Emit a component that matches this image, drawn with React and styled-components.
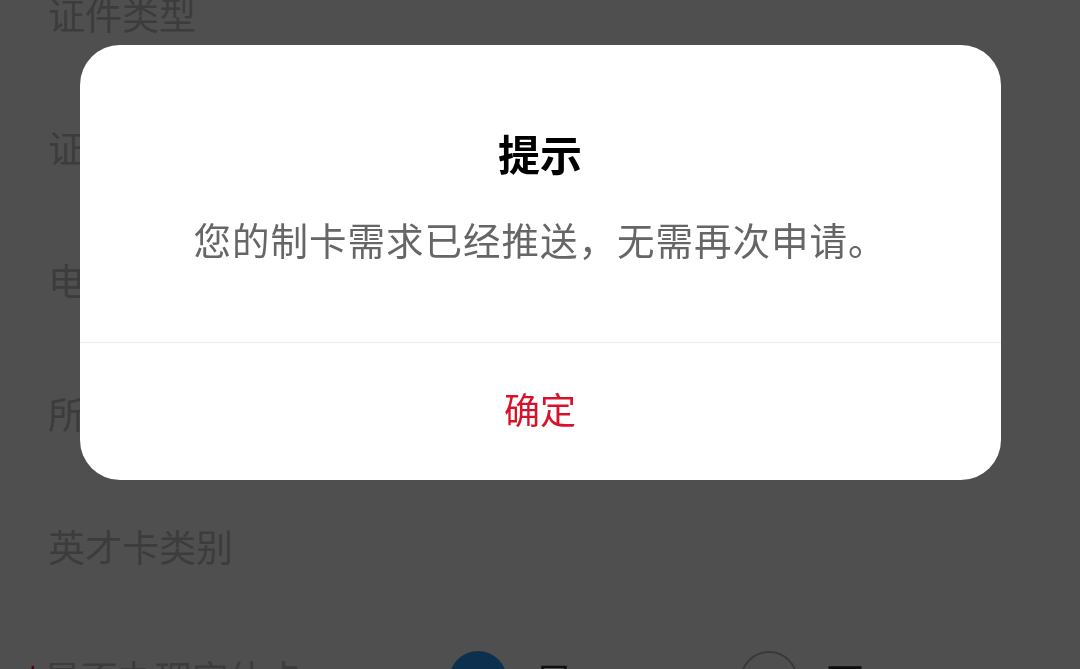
import React from 'react';
import styled, { createGlobalStyle } from 'styled-components';

const GlobalStyle = createGlobalStyle`
  html, body {
    margin: 0;
    padding: 0;
    background: #ffffff;
    overflow: hidden;
  }

  body {
    font-family: "Noto Sans CJK SC", "Noto Sans", sans-serif;
  }
`;

const Page = styled.div`
  width: 1080px;
  height: 669px;
  overflow: hidden;
  background: #ffffff;
`;

// the form is scrolled a little: first row is half out of view
const Form = styled.div`
  margin-top: -52px;
  display: flex;
  flex-direction: column;
`;

const Row = styled.div`
  height: 133px;
  display: flex;
  align-items: center;
  padding-left: ${(p) => (p.required ? '24px' : '48px')};
`;

const Label = styled.div`
  width: ${(p) => (p.required ? '425px' : 'auto')};
  font-size: 37px;
  line-height: 1;
  color: #c3c3c3;
  white-space: nowrap;
  display: flex;
  align-items: flex-start;
`;

const Star = styled.span`
  color: #f0102a;
  font-size: 38px;
  margin-right: 2px;
  line-height: 1.1;
`;

const RadioGroup = styled.div`
  display: flex;
  align-items: center;
  gap: 167px;
`;

const Option = styled.div`
  display: flex;
  align-items: center;
  gap: 28px;
  font-size: 38px;
  color: #333333;
`;

const Circle = styled.span`
  width: 58px;
  height: 58px;
  border-radius: 50%;
  box-sizing: border-box;
  display: flex;
  align-items: center;
  justify-content: center;
  background: ${(p) => (p.checked ? '#2a9cff' : '#ffffff')};
  border: ${(p) => (p.checked ? 'none' : '2px solid #b8b8b8')};
`;

const Overlay = styled.div`
  position: fixed;
  inset: 0;
  background: rgba(0, 0, 0, 0.69);
  display: flex;
  justify-content: center;
  align-items: flex-start;
  padding-top: 45px;
`;

const Dialog = styled.div`
  width: 921px;
  background: #ffffff;
  border-radius: 40px;
  overflow: hidden;
  display: flex;
  flex-direction: column;
`;

const Body = styled.div`
  padding: 81px 40px 78px;
  display: flex;
  flex-direction: column;
  align-items: center;
  gap: 34px;
  border-bottom: 1px solid #ececec;
`;

const Title = styled.div`
  font-size: 42px;
  line-height: 54px;
  font-weight: 700;
  color: #000000;
`;

const Message = styled.div`
  font-size: 37.5px;
  line-height: 50px;
  color: #666666;
  letter-spacing: 1px;
`;

const Footer = styled.div`
  height: 137px;
  display: flex;
  align-items: center;
  justify-content: center;
  padding-bottom: 8px;
  box-sizing: border-box;
  font-size: 36px;
  color: #d7132b;
`;

const rows = ['证件类型', '证件号码', '电话号码', '所在单位', '英才卡类别'];

const Check = () => (
  <svg width="34" height="34" viewBox="0 0 24 24" fill="none">
    <path d="M5 12.5l4.5 4.5L19 7" stroke="#ffffff" strokeWidth="2.4" strokeLinecap="round" strokeLinejoin="round" />
  </svg>
);

const App = () => {
  return (
    <Page>
      <GlobalStyle />
      <Form>
        {rows.map((text) => (
          <Row key={text}>
            <Label>{text}</Label>
          </Row>
        ))}
        <Row required>
          <Label required>
            <Star>*</Star>
            是否办理实体卡
          </Label>
          <RadioGroup>
            <Option>
              <Circle checked>
                <Check />
              </Circle>
              是
            </Option>
            <Option>
              <Circle />
              否
            </Option>
          </RadioGroup>
        </Row>
      </Form>
      <Overlay>
        <Dialog>
          <Body>
            <Title>提示</Title>
            <Message>您的制卡需求已经推送，无需再次申请。</Message>
          </Body>
          <Footer>确定</Footer>
        </Dialog>
      </Overlay>
    </Page>
  );
};

export default App;
